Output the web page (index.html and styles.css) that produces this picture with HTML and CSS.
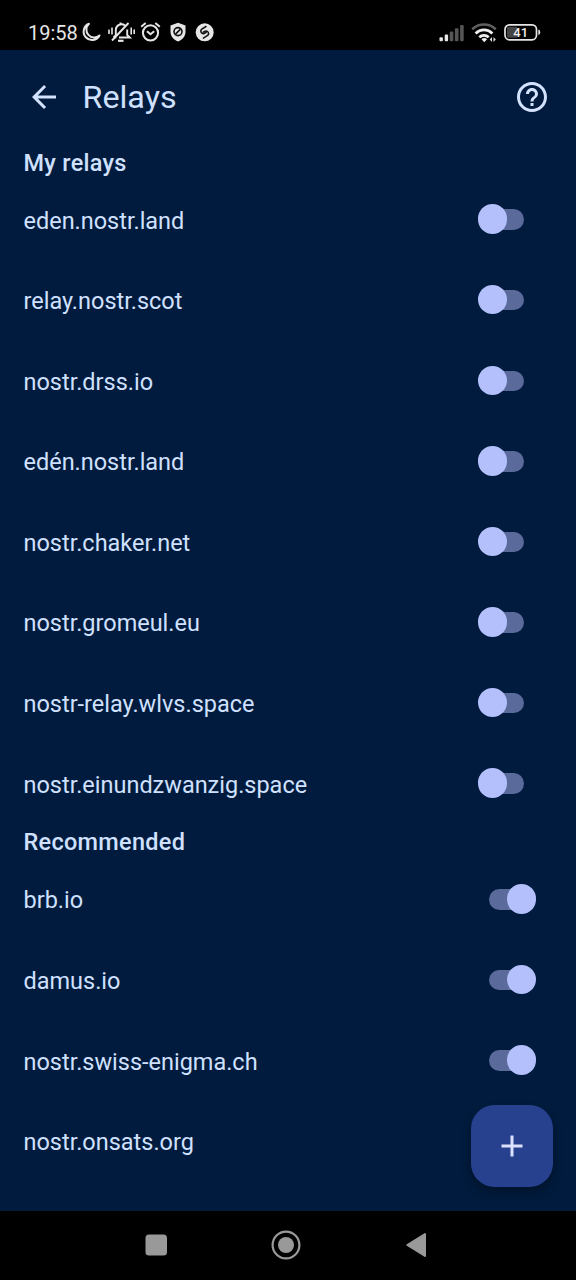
FILE: index.html
```html
<!DOCTYPE html>
<html lang="en">
<head>
<meta charset="utf-8">
<title>Relays</title>
<link rel="stylesheet" href="styles.css">
</head>
<body>
<div class="screen">
  <div class="status-bar">
    <span class="clock">19:58</span>
    <svg class="status-left" width="140" height="24" viewBox="0 0 140 24" fill="none" stroke="#e6e6e6" stroke-width="2">
      <path d="M11 3.800A8.400 8.400 0 1 0 21.500 15.500A7.600 7.600 0 0 1 11 3.800Z" stroke-linejoin="round"/>
      <g stroke-width="1.900">
        <path d="M35.500 17.500h3M37.800 15.500V10a5.700 5.700 0 0 1 9.200-4.500M49.200 9.500V15l2.600 2.500H41M35.500 17.500l2.300-2.200M42.500 4V2.500M34 20.500L50.500 3"/>
        <path d="M40 20.800h5.500" stroke-width="2.200"/>
        <path d="M31 9.500v4.500M34 7.500v7M53.200 7.500v7M56.200 9.500v4.500" stroke-width="1.600"/>
      </g>
      <circle cx="72.500" cy="12.800" r="7.600"/>
      <path d="M69 11.300l3.500 3 3.700-3M63.200 6.800l4.500-3.800M77.300 3l4.500 3.800"/>
      <path d="M100 2.800l7.500 2.700v6.300c0 4.300-2.700 7.700-7.500 9.700c-4.800-2-7.500-5.400-7.500-9.700V5.500Z" fill="#e6e6e6" stroke="none"/>
      <circle cx="100" cy="11.600" r="4" stroke="#111" stroke-width="1.600"/>
      <path d="M97.500 14.100l5-5" stroke="#111" stroke-width="1.600"/>
      <circle cx="126.700" cy="12.300" r="9" fill="#e6e6e6" stroke="none"/>
      <path d="M128 6.500l-4.200 2.700a2.500 2.500 0 0 0 2.400 4.300l2-1.100M125.400 18.100l4.200-2.700a2.500 2.500 0 0 0-2.400-4.300l-2 1.100" stroke="#111" stroke-width="1.500" stroke-linecap="round"/>
    </svg>
    <svg class="status-right" width="106" height="24" viewBox="0 0 106 24">
      <g fill="#e6e6e6"><rect x="1.500" y="16.200" width="3.400" height="4" rx="1"/><rect x="6.700" y="13.600" width="3.400" height="6.600" rx="1"/></g>
      <g fill="#555"><rect x="11.700" y="10.500" width="3.600" height="9.700" rx="1"/><rect x="16.900" y="7.300" width="3.600" height="12.900" rx="1"/><rect x="22.100" y="4" width="3.600" height="16.200" rx="1"/></g>
      <g fill="none" stroke="#eee" stroke-width="2.800">
        <path d="M34.200 8.200a17 17 0 0 1 23.600 0" stroke="#606060" stroke-width="2.600"/>
        <path d="M37.600 12.400a12 12 0 0 1 16.800 0M41.300 16.200a6.800 6.800 0 0 1 9.400 0"/>
      </g>
      <path d="M43.500 18.300a4 4 0 0 1 5.600 0l-2.800 3Z" fill="#eee"/>
      <path d="M51.700 18.500l2.300-2.500v5ZM57.800 18.500l-2.300-2.500v5Z" fill="#ddd"/>
      <rect x="67" y="3.800" width="31.500" height="15" rx="4.500" fill="#000" stroke="#e6e6e6" stroke-width="1.700"/>
      <path d="M70.500 5.800H79v11h-8.500a1.500 1.500 0 0 1-1.500-1.500v-8A1.500 1.500 0 0 1 70.500 5.800Z" fill="#444"/>
      <path d="M100.300 8.800h.7q1.200.4 1.200 2.500t-1.200 2.500h-.7Z" fill="#e6e6e6"/>
      <text class="battery-text" x="82.700" y="15.900" text-anchor="middle">41</text>
    </svg>
  </div>
  <main class="app">
    <header class="app-bar">
      <svg class="back" width="36" height="36" viewBox="0 0 24 24" fill="#d3e3ff"><path d="M20 11H7.830l5.590-5.590L12 4l-8 8 8 8 1.410-1.410L7.830 13H20v-2z"/></svg>
      <h1 class="title">Relays</h1>
      <svg class="help" width="36" height="36" viewBox="0 0 24 24" fill="#d3e3ff"><path d="M11 18h2v-2h-2v2zm1-16C6.480 2 2 6.480 2 12s4.480 10 10 10 10-4.480 10-10S17.520 2 12 2zm0 18c-4.410 0-8-3.590-8-8s3.590-8 8-8 8 3.590 8 8-3.590 8-8 8zm0-14c-2.210 0-4 1.790-4 4h2c0-1.100.9-2 2-2s2 .9 2 2c0 2-3 1.750-3 5h2c0-2.250 3-2.500 3-5 0-2.210-1.790-4-4-4z"/></svg>
    </header>
    <h2 class="section">My relays</h2>
    <div class="row"><span>eden.nostr.land</span><i class="switch"></i></div>
    <div class="row"><span>relay.nostr.scot</span><i class="switch"></i></div>
    <div class="row"><span>nostr.drss.io</span><i class="switch"></i></div>
    <div class="row"><span>edén.nostr.land</span><i class="switch"></i></div>
    <div class="row"><span>nostr.chaker.net</span><i class="switch"></i></div>
    <div class="row"><span>nostr.gromeul.eu</span><i class="switch"></i></div>
    <div class="row"><span>nostr-relay.wlvs.space</span><i class="switch"></i></div>
    <div class="row"><span>nostr.einundzwanzig.space</span><i class="switch"></i></div>
    <h2 class="section">Recommended</h2>
    <div class="row"><span>brb.io</span><i class="switch on"></i></div>
    <div class="row"><span>damus.io</span><i class="switch on"></i></div>
    <div class="row"><span>nostr.swiss-enigma.ch</span><i class="switch on"></i></div>
    <div class="row"><span>nostr.onsats.org</span></div>
    <button class="fab" aria-label="Add relay"><svg width="36" height="36" viewBox="0 0 36 36"><path d="M18 7.500v21M7.500 18h21" stroke="#dbe1ff" stroke-width="3"/></svg></button>
  </main>
  <nav class="nav-bar">
    <svg width="30" height="30" viewBox="0 0 30 30"><rect x="4.500" y="4.500" width="21.500" height="21" rx="3.500" fill="#999"/></svg>
    <svg width="30" height="30" viewBox="0 0 30 30"><circle cx="15" cy="15" r="13.400" fill="none" stroke="#999" stroke-width="2.200"/><circle cx="15" cy="15" r="8" fill="#999"/></svg>
    <svg width="30" height="30" viewBox="0 0 30 30"><path d="M6.300 15L24 4V26Z" fill="#999" stroke="#999" stroke-width="2" stroke-linejoin="round"/></svg>
  </nav>
</div>
</body>
</html>
```
FILE: styles.css
```css
* { box-sizing: border-box; }
body { margin: 0; background: #000; font-family: Roboto, sans-serif; }
.screen { width: 576px; height: 1280px; display: flex; flex-direction: column; overflow: hidden; }
.status-bar { height: 50px; flex: none; display: flex; align-items: center; padding: 14px 32px 0 28px; }
.clock { width: 50px; color: #e6e6e6; font-size: 20px; line-height: 24px; padding-top: 2px; }
.status-left { margin-top: 0; }
.status-right { margin: 1px 0 0 auto; }
.battery-text { font: 500 13px Roboto, sans-serif; fill: #eee; }
.app { position: relative; height: 1161px; flex: none; background: #001b3d; color: #d0e1ff; overflow: hidden; }
.app-bar { height: 94.600px; display: flex; align-items: center; padding: 0 26px; }
.title { margin: 0 auto 0 20.500px; font-size: 32.270px; line-height: 40px; font-weight: 400; }
.section { margin: 0; height: 35.300px; padding-left: 23.500px; font-size: 23.470px; line-height: 36px; font-weight: 500; letter-spacing: .3px; }
.row { height: 80.570px; display: flex; align-items: center; justify-content: space-between; padding: 1px 40px 0 23.500px; font-size: 23.470px; line-height: 36px; }
.switch { position: relative; width: 58.500px; height: 30px; margin-top: -2.500px; }
.switch::before { content: ""; position: absolute; left: 11.500px; top: 5px; width: 35px; height: 20.500px; border-radius: 11px; background: #596a9b; }
.switch::after { content: ""; position: absolute; left: 0; top: 0; width: 29.500px; height: 29.500px; border-radius: 50%; background: #b4c0fc; }
.switch.on::after { left: 29px; }
.fab { position: absolute; left: 471px; top: 1055px; width: 82px; height: 82px; border: 0; padding: 0; border-radius: 23.500px; background: #27418f; display: flex; align-items: center; justify-content: center; box-shadow: 0 5px 10px rgba(0,0,0,.3); }
.nav-bar { height: 69px; flex: none; display: flex; gap: 100px; padding: 0 0 1px 141px; align-items: center; }
```
